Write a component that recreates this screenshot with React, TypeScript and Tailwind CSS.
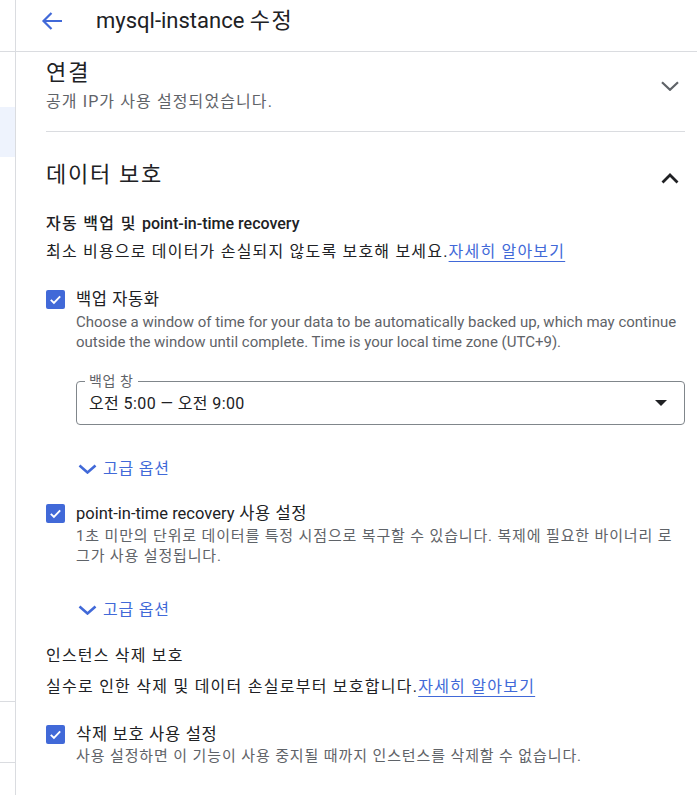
import React from "react";

const font = { fontFamily: 'Roboto, "Noto Sans CJK KR", sans-serif' };

function Check() {
  return (
    <div className="flex h-[19px] w-[19px] shrink-0 items-center justify-center rounded-[2px] bg-[#4169d8]">
      <svg width="15" height="15" viewBox="0 0 24 24">
        <path d="M4.5 12.5l5 5L19.5 7" fill="none" stroke="white" strokeWidth="3" />
      </svg>
    </div>
  );
}

function Advanced() {
  return (
    <div className="flex h-[22px] items-center gap-[6px] pl-[32px] text-[16px] leading-[22px] tracking-[0.8px] text-[#4169d8]">
      <svg width="19" height="10" viewBox="0 0 19 10">
        <path d="M1.5 1.5l8 7 8-7" fill="none" stroke="#4169d8" strokeWidth="2.6" />
      </svg>
      <span>고급 옵션</span>
    </div>
  );
}

export default function App() {
  return (
    <div className="flex h-[795px] w-[697px] overflow-hidden bg-white text-[#202124]" style={font}>
      <aside className="flex w-[16px] shrink-0 flex-col border-r border-[#dadce0]">
        <div className="h-[52px] shrink-0 border-b border-[#dadce0]" />
        <div className="h-[55px] shrink-0" />
        <div className="h-[50px] shrink-0 bg-[#eef3fd]" />
        <div className="h-[545px] shrink-0 border-b border-[#dadce0]" />
        <div className="h-[61px] shrink-0 border-b border-[#dadce0]" />
      </aside>
      <main className="flex min-w-0 flex-1 flex-col">
        <header className="flex h-[52px] shrink-0 items-start border-b border-[#dadce0] pl-[25px] pt-[9px]">
          <div className="flex h-[24px] items-center">
            <svg width="22" height="20" viewBox="0 0 22 20">
              <path d="M21 10H2.5M10.5 2L2.5 10l8 8" fill="none" stroke="#4169d8" strokeWidth="2.2" />
            </svg>
          </div>
          <h1 className="ml-[33px] text-[22px] font-normal leading-[24px]">
            mysql-instance <span className="tracking-[1.5px]">수정</span>
          </h1>
        </header>
        <div className="flex flex-col pl-[30px] pr-[12px]">
          {/* 연결 */}
          <div className="flex items-center justify-between border-b border-[#dadce0] pb-[18px] pt-[5px]">
            <div className="flex flex-col">
              <div className="text-[22px] leading-[32px] tracking-[2px]">연결</div>
              <div className="mt-[2px] text-[16px] leading-[22px] tracking-[1.1px] text-[#5f6368]">
                공개 IP가 사용 설정되었습니다.
              </div>
            </div>
            <svg width="18" height="10" viewBox="0 0 18 10" className="mr-[6px] mt-[2px]">
              <path d="M1 1.2l8 7.6 8-7.6" fill="none" stroke="#5f6368" strokeWidth="2.2" />
            </svg>
          </div>

          {/* 데이터 보호 */}
          <div className="flex items-center justify-between pt-[27px]">
            <div className="text-[22px] leading-[32px] tracking-[1.7px]">데이터 보호</div>
            <svg width="18" height="12" viewBox="0 0 18 12" className="mr-[6px] mt-[6px]">
              <path d="M1.5 10.5L9 3l7.5 7.5" fill="none" stroke="#202124" strokeWidth="2.8" />
            </svg>
          </div>

          <div className="mt-[23px] text-[16px] font-medium leading-[20px] tracking-[1.3px]">
            자동 백업 및 <span className="tracking-normal">point-in-time recovery</span>
          </div>
          <div className="mt-[7px] text-[16px] leading-[22px] tracking-[1.2px]">
            최소 비용으로 데이터가 손실되지 않도록 보호해 보세요.
            <span className="text-[#4169d8] underline decoration-[1px] underline-offset-[4px]">자세히 알아보기</span>
          </div>

          {/* 백업 자동화 */}
          <div className="mt-[27px] flex gap-[11px]">
            <Check />
            <div className="flex flex-col">
              <div className="text-[16.5px] leading-[20px] tracking-[0.6px]">백업 자동화</div>
              <div className="mt-[2px] whitespace-nowrap text-[15px] leading-[20px] text-[#5f6368]">
                Choose a window of time for your data to be automatically backed up, which may continue
                <br />
                outside the window until complete. Time is your local time zone (UTC+9).
              </div>
            </div>
          </div>

          {/* select */}
          <div className="relative ml-[30px] mt-[29px] flex h-[44px] items-center justify-between rounded-[4px] border border-[#80868b] pl-[12px] pr-[17px]">
            <span className="absolute left-[8px] top-[-10px] bg-white px-[4px] text-[14px] leading-[18px] tracking-[0.6px] text-[#5f6368]">
              백업 창
            </span>
            <span className="mt-[1px] text-[16px] tracking-[0.4px]">오전 5:00 — 오전 9:00</span>
            <svg width="12" height="6" viewBox="0 0 12 6">
              <path d="M0 0h12L6 6z" fill="#202124" />
            </svg>
          </div>

          <div className="mt-[33px]">
            <Advanced />
          </div>

          {/* PITR */}
          <div className="mt-[24px] flex gap-[11px]">
            <Check />
            <div className="flex flex-col">
              <div className="text-[16.5px] leading-[20px] tracking-[0.6px]">
                <span className="tracking-normal">point-in-time recovery</span> 사용 설정
              </div>
              <div className="mt-[2px] whitespace-nowrap text-[15px] leading-[20px] tracking-[0.85px] text-[#5f6368]">
                1초 미만의 단위로 데이터를 특정 시점으로 복구할 수 있습니다. 복제에 필요한 바이너리 로
                <br />
                그가 사용 설정됩니다.
              </div>
            </div>
          </div>

          <div className="mt-[33px]">
            <Advanced />
          </div>

          <div className="mt-[25px] text-[16px] leading-[20px] tracking-[1.2px]">인스턴스 삭제 보호</div>
          <div className="mt-[10px] text-[16px] leading-[22px] tracking-[1.25px]">
            실수로 인한 삭제 및 데이터 손실로부터 보호합니다.
            <span className="text-[#4169d8] underline decoration-[1px] underline-offset-[4px]">자세히 알아보기</span>
          </div>

          <div className="mt-[27px] flex gap-[11px]">
            <Check />
            <div className="flex flex-col">
              <div className="text-[16.5px] leading-[20px] tracking-[0.7px]">삭제 보호 사용 설정</div>
              <div className="mt-[1px] whitespace-nowrap text-[15px] leading-[20px] tracking-[0.88px] text-[#5f6368]">
                사용 설정하면 이 기능이 사용 중지될 때까지 인스턴스를 삭제할 수 없습니다.
              </div>
            </div>
          </div>
        </div>
      </main>
    </div>
  );
}
